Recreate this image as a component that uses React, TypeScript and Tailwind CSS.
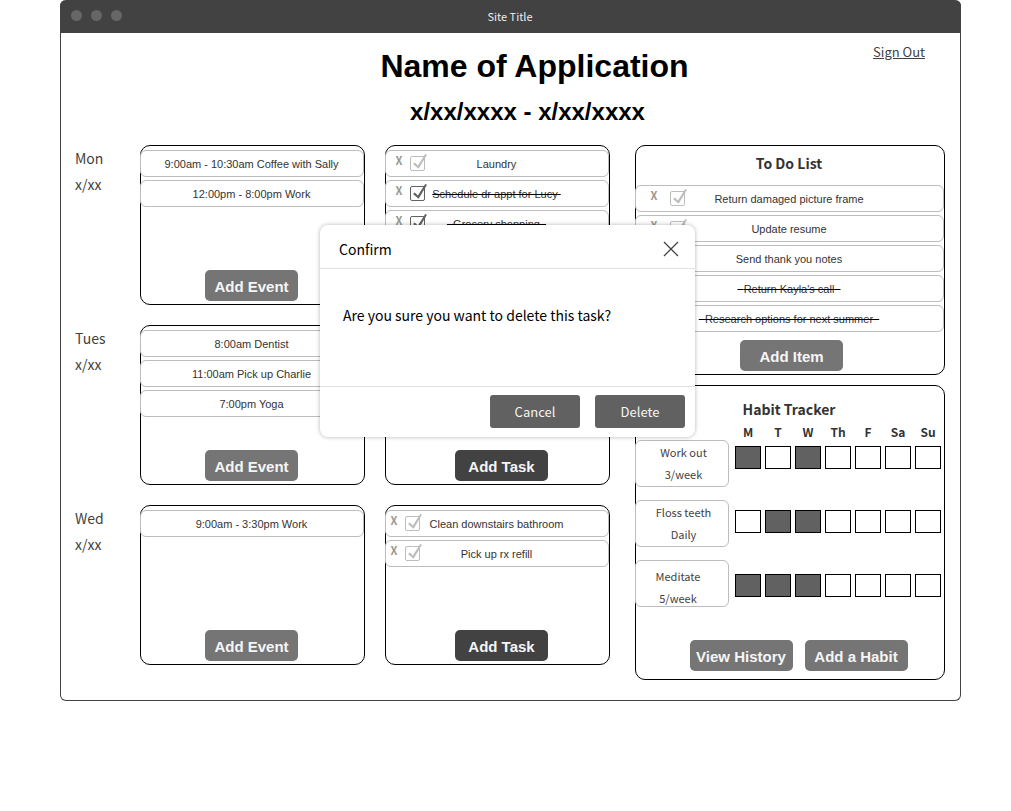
import type { ReactNode } from "react";

type Entry = { text: string; done?: boolean; before?: number; after?: number };
type Day = { name: string; date: string; events: string[]; tasks: Entry[]; tight?: boolean };

const days: Day[] = [
  {
    name: "Mon",
    date: "x/xx",
    events: ["9:00am - 10:30am Coffee with Sally", "12:00pm - 8:00pm Work"],
    tasks: [
      { text: "Laundry" },
      { text: "Schedule dr appt for Lucy", done: true, after: 1 },
      { text: "Grocery shopping", done: true, before: 2, after: 2 },
    ],
  },
  {
    name: "Tues",
    date: "x/xx",
    events: ["8:00am Dentist", "11:00am Pick up Charlie", "7:00pm Yoga"],
    tasks: [],
  },
  {
    name: "Wed",
    date: "x/xx",
    events: ["9:00am - 3:30pm Work"],
    tasks: [{ text: "Clean downstairs bathroom" }, { text: "Pick up rx refill" }],
    tight: true,
  },
];

const todos: Entry[] = [
  { text: "Return damaged picture frame" },
  { text: "Update resume" },
  { text: "Send thank you notes" },
  { text: "Return Kayla's call", done: true, before: 2, after: 2 },
  { text: "Research options for next summer", done: true, before: 2, after: 2 },
];

const weekdays = ["M", "T", "W", "Th", "F", "Sa", "Su"];

const habits = [
  { name: "Work out", goal: "3/week", done: [0, 2], box: "pl-[3px]" },
  { name: "Floss teeth", goal: "Daily", done: [1, 2], box: "pl-[3px]" },
  { name: "Meditate", goal: "5/week", done: [0, 1, 2], box: "pt-1 pr-2" },
];

const slug = (s: string) => s.toLowerCase().replace(/[^a-z0-9]+/g, "-");

function ActionButton({ children, tone }: { children: ReactNode; tone: string }) {
  return (
    <button
      type="button"
      className={`h-[31px] rounded-[5px] pt-[2px] text-center font-['Liberation_Sans',sans-serif] text-[15px] leading-5 font-bold text-[#f5f5f5] ${tone}`}
    >
      {children}
    </button>
  );
}

function Row({ children }: { children: ReactNode }) {
  return (
    <li className="-ml-px grid h-[27px] items-center rounded-[6px] border border-[#bdbdbd] bg-white pr-px font-['Liberation_Sans',sans-serif] text-[11px] leading-4 text-[#333333]">
      {children}
    </li>
  );
}

function CheckRow({ entry, inset, gap }: { entry: Entry; inset: string; gap: string }) {
  const id = slug(entry.text);
  const nb = "\u00a0";
  return (
    <Row>
      <div className={`col-start-1 row-start-1 flex items-center justify-self-start ${inset} ${gap}`}>
        <button
          type="button"
          className="w-2 self-start pb-1 font-['Noto_Sans_CJK_SC',sans-serif] text-[11px] leading-[9px] font-bold text-[#9a9890]"
        >
          X
        </button>
        <span className={`grid ${entry.done ? "text-[#616161]" : "text-[#bdbdbd]"}`}>
          <input
            id={id}
            type="checkbox"
            defaultChecked={entry.done}
            className="col-start-1 row-start-1 size-[15px] appearance-none rounded-[2px] border border-current"
          />
          <svg
            viewBox="0 0 15 15"
            className="pointer-events-none col-start-1 row-start-1 size-[15px] overflow-visible"
            fill="currentColor"
            aria-hidden="true"
          >
            <path d="M3 8 4.8 6.6 7.9 9.6 15.2-2 17-1.2 8.6 12.8Z" />
          </svg>
        </span>
      </div>
      <label
        htmlFor={id}
        className={`col-start-1 row-start-1 justify-self-center ${entry.done ? "line-through decoration-black decoration-1" : ""}`}
      >
        {nb.repeat(entry.before ?? 0)}
        {entry.text}
        {nb.repeat(entry.after ?? 0)}
      </label>
    </Row>
  );
}

function DayRow({ day }: { day: Day }) {
  return (
    <section className="flex">
      <h3 className="w-[65px] shrink-0 text-[14px] leading-[26px] text-[#424242]">
        {day.name}
        <br />
        {day.date}
      </h3>
      <div className="grid grow grid-cols-2 gap-5">
        <div className="flex min-h-40 flex-col justify-between rounded-[10px] border border-black bg-white py-1 pb-[3px]">
          <ul className="flex flex-col gap-[3px]">
            {day.events.map((e) => (
              <Row key={e}>
                <span className="text-center">{e}</span>
              </Row>
            ))}
          </ul>
          <div className="flex justify-center pr-[2px]">
            <ActionButton tone="w-[93px] bg-[#757575]">Add Event</ActionButton>
          </div>
        </div>
        <div className="flex min-h-40 flex-col justify-between rounded-[10px] border border-black bg-white py-1 pb-[3px]">
          <ul className="flex flex-col gap-[3px]">
            {day.tasks.map((t) => (
              <CheckRow key={t.text} entry={t} inset={day.tight ? "pl-1" : "pl-[9px]"} gap="gap-[7px]" />
            ))}
          </ul>
          <div className="flex justify-center pl-2">
            <ActionButton tone="w-[93px] bg-[#424242]">Add Task</ActionButton>
          </div>
        </div>
      </div>
    </section>
  );
}

function TodoList() {
  return (
    <section className="flex flex-col rounded-[10px] border border-black bg-white pb-[3px]">
      <h3 className="pt-[5px] pb-[9px] pr-[2px] text-center text-[14px] leading-[25px] font-bold text-[#333333]">To Do List</h3>
      <ul className="flex flex-col gap-[3px]">
        {todos.map((t) => (
          <CheckRow key={t.text} entry={t} inset="pl-[14px]" gap="gap-3" />
        ))}
      </ul>
      <div className="flex justify-center pt-2 pl-[3px]">
        <ActionButton tone="w-[103px] bg-[#757575]">Add Item</ActionButton>
      </div>
    </section>
  );
}

function HabitTracker() {
  return (
    <section className="flex flex-col rounded-[10px] border border-black bg-white pt-3">
      <h3 className="pr-[2px] text-center text-[14px] leading-[22px] font-bold text-[#333333]">Habit Tracker</h3>
      <div className="flex justify-between">
        <ul className="-ml-px flex flex-col gap-[13px] pt-5 text-center text-[11px] leading-[22px] text-[#424242]">
          {habits.map((h) => (
            <li
              key={h.name}
              id={slug(h.name)}
              className={`h-[47px] w-[94px] rounded-[6px] border border-[#bdbdbd] bg-white ${h.box}`}
            >
              {h.name}
              <br />
              {h.goal}
            </li>
          ))}
        </ul>
        <table className="mr-px self-start text-[12px] leading-6 text-[#333333]">
          <thead>
            <tr>
              {weekdays.map((d) => (
                <th key={d} id={`day-${d}`} className="w-[30px] p-0 pb-[2px] text-center">
                  {d}
                </th>
              ))}
            </tr>
          </thead>
          <tbody>
            {habits.map((h) => (
              <tr key={h.name} className="h-16">
                {weekdays.map((d, i) => (
                  <td key={d} className="p-0 align-top">
                    <input
                      type="checkbox"
                      aria-labelledby={`${slug(h.name)} day-${d}`}
                      defaultChecked={h.done.includes(i)}
                      className="mx-auto block h-[23px] w-[26px] appearance-none border border-black bg-white checked:bg-[#616161]"
                    />
                  </td>
                ))}
              </tr>
            ))}
          </tbody>
        </table>
      </div>
      <div className="mt-auto flex justify-center gap-3 pb-2 pl-[17px]">
        <ActionButton tone="w-[103px] bg-[#757575]">View History</ActionButton>
        <ActionButton tone="w-[103px] bg-[#757575]">Add a Habit</ActionButton>
      </div>
    </section>
  );
}

function ConfirmDialog() {
  return (
    <div className="absolute inset-x-0 top-[225px] flex justify-center pr-[6px]">
      <div
        role="dialog"
        aria-labelledby="confirm-title"
        className="w-[375px] rounded-[8px] bg-white text-black shadow-[0_0_4px_rgba(0,0,0,0.3)]"
      >
        <div className="flex h-11 items-center justify-between border-b border-[#e0e0e0] pt-1 pr-4 pl-[19px]">
          <h2 id="confirm-title" className="text-[14px] leading-6">
            Confirm
          </h2>
          <button type="button" aria-labelledby="confirm-title">
            <svg viewBox="0 0 16 16" className="size-4" stroke="#424242" strokeWidth="1.3" aria-hidden="true">
              <path d="M1 1 15 15M15 1 1 15" />
            </svg>
          </button>
        </div>
        <p className="h-[117px] px-[23px] pt-[34px] text-[14px] leading-6">
          Are you sure you want to delete this task?
        </p>
        <div className="flex h-[51px] justify-end gap-[15px] border-t border-[#e0e0e0] pt-2 pr-[10px] text-[13px] text-[#f5f5f5]">
          <button type="button" className="h-[33px] w-[90px] rounded-[3px] bg-[#616161]">
            Cancel
          </button>
          <button type="button" className="h-[33px] w-[90px] rounded-[3px] bg-[#616161]">
            Delete
          </button>
        </div>
      </div>
    </div>
  );
}

export default function App() {
  return (
    <div className="min-h-screen bg-white pr-[50px] pl-[60px] font-['Noto_Sans_CJK_SC',sans-serif]">
      <div className="relative rounded-[6px] border border-t-0 border-[#424242] bg-white">
        <div className="-mx-px grid h-[33px] items-center rounded-t-[6px] bg-[#424242]">
          <div className="col-start-1 row-start-1 flex gap-[9px] pb-[3px] pl-[11px]">
            <span className="size-[11px] rounded-full bg-[#666666]" />
            <span className="size-[11px] rounded-full bg-[#666666]" />
            <span className="size-[11px] rounded-full bg-[#666666]" />
          </div>
          <p className="col-start-1 row-start-1 justify-self-center pr-px pb-[2px] text-[11px] leading-4 text-[#eeeeee]">
            Site Title
          </p>
        </div>
        <header className="grid pt-[11px] font-['Liberation_Sans',sans-serif] font-bold text-black">
          <h1 className="col-start-1 row-start-1 pl-12 text-center text-[32px] leading-[44px]">Name of Application</h1>
          <a
            href="#"
            className="col-start-1 row-start-1 mr-[35px] self-start justify-self-end font-['Noto_Sans_CJK_SC',sans-serif] text-[13px] leading-4 font-normal text-[#424242] underline"
          >
            Sign Out
          </a>
          <h2 className="pt-2 pl-[34px] text-center text-[24px] leading-8">x/xx/xxxx - x/xx/xxxx</h2>
        </header>
        <main className="grid grid-cols-[535fr_310fr] gap-x-[25px] pt-[17px] pr-[15px] pb-5 pl-[14px]">
          <div className="flex flex-col gap-5">
            {days.map((d) => (
              <DayRow key={d.name} day={d} />
            ))}
          </div>
          <div className="flex flex-col gap-[10px]">
            <TodoList />
            <div className="grid min-h-[295px]">
              <HabitTracker />
            </div>
          </div>
        </main>
        <ConfirmDialog />
      </div>
    </div>
  );
}
